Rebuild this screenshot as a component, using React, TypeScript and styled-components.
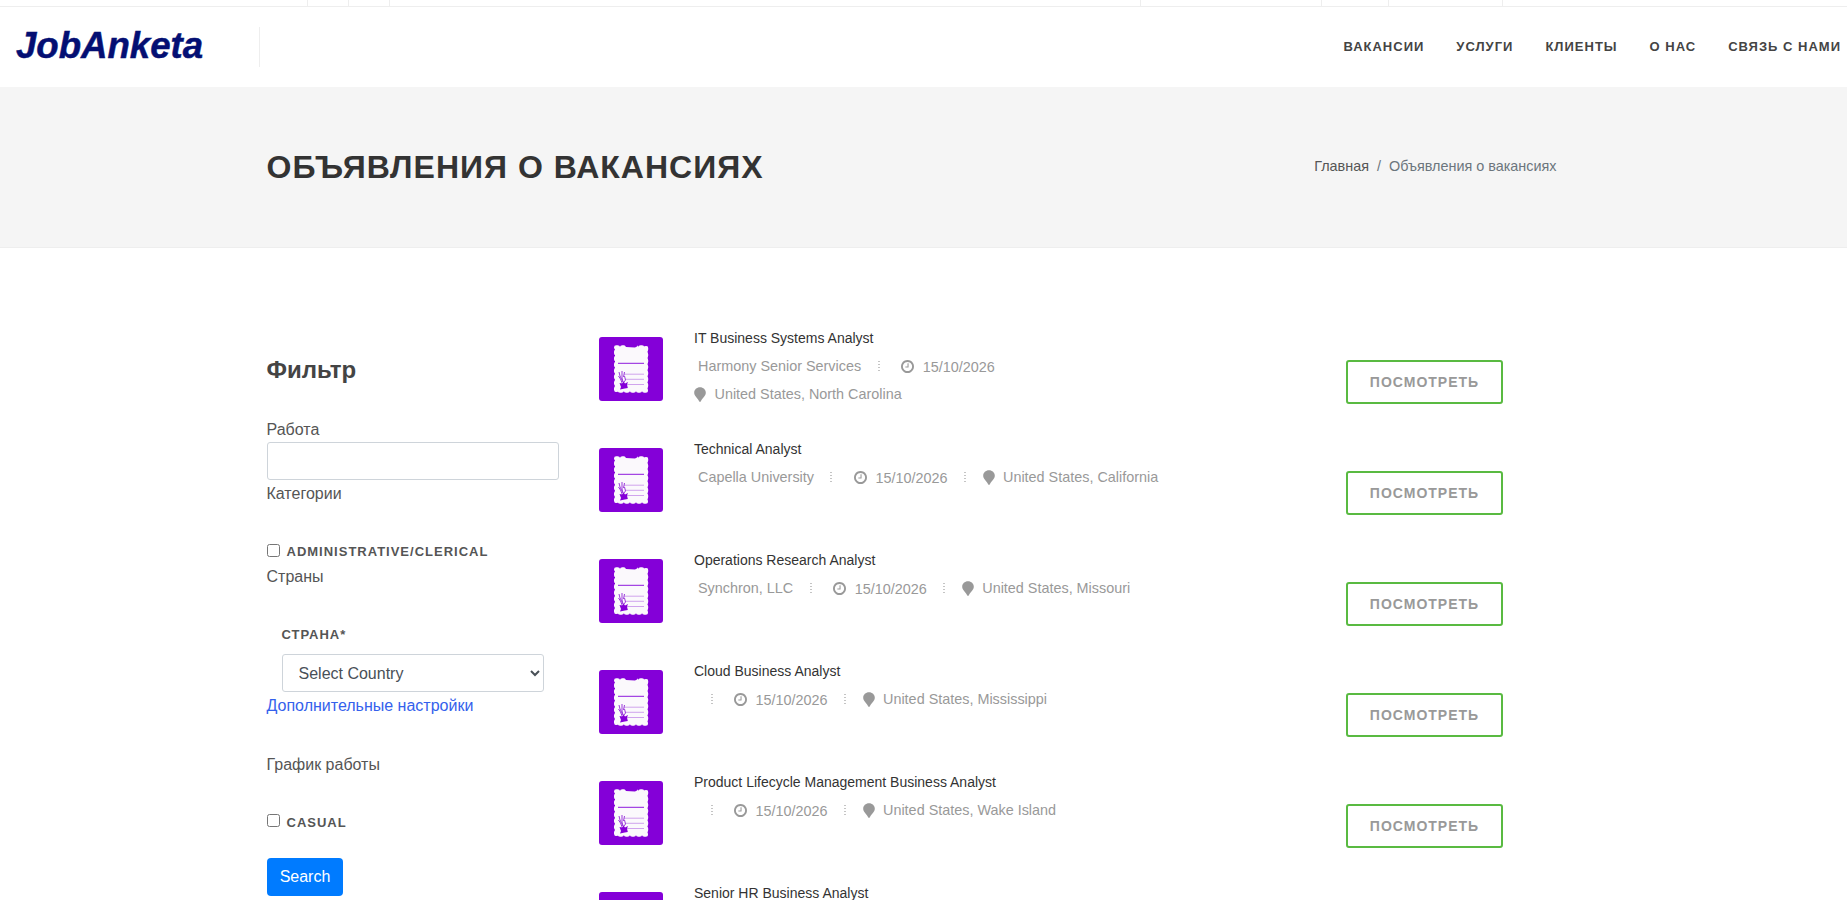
import React from "react";
import styled, { createGlobalStyle } from "styled-components";

const Global = createGlobalStyle`
  *, *::before, *::after { box-sizing: border-box; }
  html, body { margin: 0; height: 900px; overflow: hidden; background: #fff; }
  body { font-family: "Liberation Sans", Arial, sans-serif; font-size: 16px; line-height: 26px; color: #555; }
`;

const Page = styled.div`height: 900px; overflow: hidden;`;

const TopBar = styled.div`
  height: 7px;
  display: flex;
  justify-content: space-between;
  padding: 0 344px 0 307px;
  border-bottom: 1px solid #eee;
`;
const Group = styled.div`display: flex;`;
const Cell = styled.div<{ $w?: number }>`
  width: ${(p) => p.$w ?? 1}px;
  border-left: 1px solid #eee;
`;

const Header = styled.header`
  height: 80px;
  display: flex;
  align-items: center;
  justify-content: space-between;
  padding-right: 6px;
`;
const LogoBox = styled.div`
  width: 260px;
  height: 40px;
  border-right: 1px solid #eee;
  padding: 1px 0 0 16px;
`;
const Logo = styled.a`
  display: block;
  font-size: 36.6px;
  line-height: 36px;
  font-weight: 700;
  font-style: italic;
  color: #040f73;
  -webkit-text-stroke: 0.5px #040f73;
`;
const Nav = styled.nav`display: flex; gap: 32px;`;
const NavLink = styled.a`
  font-size: 13px;
  line-height: 22px;
  font-weight: 700;
  letter-spacing: 1px;
  color: #444;
  white-space: nowrap;
`;

const TitleBand = styled.section`
  height: 161px;
  background: #f5f5f5;
  border-bottom: 1px solid #eee;
  display: flex;
  justify-content: space-between;
  align-items: center;
  padding: 0 290.5px 0 266.5px;
`;
const PageTitle = styled.h1`
  margin: 0;
  font-size: 32px;
  line-height: 36px;
  letter-spacing: 1px;
  font-weight: 600;
  color: #333;
`;
const Crumbs = styled.div`
  display: flex;
  gap: 8px;
  margin-bottom: 2px;
  font-size: 14.4px;
  line-height: 22px;
  color: #6c757d;
`;
const CrumbLink = styled.a`color: #555;`;

const Content = styled.main`
  display: flex;
  padding: 89px 0 0 266.5px;
`;
const Sidebar = styled.aside`width: 292px; margin-right: 40.5px; padding-top: 10px;`;
const FilterTitle = styled.h3`
  margin: 0 0 28px;
  font-size: 24px;
  line-height: 36px;
  font-weight: 600;
  color: #444;
  padding-top: 5px;
`;
const Label = styled.div<{ $top?: number; $low?: boolean }>`
  height: 26px;
  margin-top: ${(p) => p.$top ?? 0}px;
  line-height: ${(p) => (p.$low ? 28 : 26)}px;
`;
const Input = styled.input`
  display: block;
  width: 100%;
  height: 38px;
  border: 1px solid #ced4da;
  border-radius: 3px;
  background: #fff;
`;
const Check = styled.label<{ $top: number; $lift?: number }>`
  display: flex;
  gap: 7px;
  margin-top: ${(p) => p.$top}px;
  height: 20px;
  input { margin: 0; width: 13px; height: 13px; }
  span { margin-top: -${(p) => p.$lift ?? 0}px; }
`;
const Caps = styled.span`
  font-size: 13px;
  line-height: 17px;
  font-weight: 700;
  letter-spacing: 1px;
  color: #555;
`;
const Field = styled.div`
  display: flex;
  flex-direction: column;
  gap: 11px;
  padding: 36px 15px 0;
`;
const Select = styled.select`
  width: 100%;
  height: 38px;
  padding: 6px 12px;
  border: 1px solid #ced4da;
  border-radius: 3px;
  background: #fff;
  font: 16px/24px "Liberation Sans", Arial, sans-serif;
  color: #495057;
`;
const More = styled.a`display: block; height: 26px; line-height: 28px; color: #3461ec;`;
const Search = styled.button`
  display: block;
  margin-top: 24px;
  width: 76px;
  height: 38px;
  padding: 0 0 0 1px;
  border: 0;
  border-radius: 4px;
  background: #007bff;
  color: #fff;
  font: 16px/24px "Liberation Sans", Arial, sans-serif;
`;

const List = styled.div`width: 904px;`;
const Job = styled.article`
  height: 111px;
  display: flex;
  align-items: flex-start;
`;
const Thumb = styled.svg`display: block; width: 64px; height: 64px; margin: 0 31px 0 0;`;
const Info = styled.div`width: 480px; flex: none; margin-top: -13px;`;
const JobTitle = styled.h4`
  margin: 0;
  font-size: 14px;
  line-height: 28px;
  font-weight: 400;
  color: #333;
`;
const Meta = styled.div`
  display: flex;
  flex-wrap: wrap;
  font-size: 14.4px;
  line-height: 28px;
  color: #999;
`;
const Company = styled.span`padding-left: 4px;`;
const Dots = styled.i<{ $gap: number }>`
  width: 2px;
  height: 12px;
  margin: 9px ${(p) => p.$gap}px 0 16.5px;
  background: repeating-linear-gradient(#c4c4c4 0 1px, #fff 1px 3px);
`;
const Item = styled.span<{ $drop?: number }>`
  display: flex;
  align-items: center;
  height: 28px;
  padding-top: ${(p) => p.$drop ?? 0}px;
  svg { display: block; flex: none; }
`;
const Text = styled.span<{ $gap: number }>`margin-left: ${(p) => p.$gap}px;`;
const ViewButton = styled.a`
  display: block;
  width: 157px;
  height: 44px;
  margin: 23px 0 0 auto;
  border: 2px solid #59ba41;
  border-radius: 3px;
  text-align: center;
  font-size: 14px;
  line-height: 40px;
  font-weight: 700;
  letter-spacing: 1px;
  color: #999;
`;

const Clock = () => (
  <svg width="13" height="13" viewBox="128 128 1536 1536" fill="#999">
    <path d="M1024 544v448q0 14-9 23t-23 9h-320q-14 0-23-9t-9-23v-64q0-14 9-23t23-9h224v-352q0-14 9-23t23-9h64q14 0 23 9t9 23zm416 352q0-148-73-273t-198-198-273-73-273 73-198 198-73 273 73 273 198 198 273 73 273-73 198-198 73-273zm224 0q0 209-103 385.5t-279.5 279.5-385.5 103-385.5-103-279.5-279.5-103-385.5 103-385.5 279.5-279.5 385.5-103 385.5 103 279.5 279.5 103 385.5z" />
  </svg>
);
const Pin = () => (
  <svg width="12" height="15" viewBox="0 0 12 15" fill="#999">
    <path d="M6 .3C2.700.3.200 2.700.200 5.800c0 3.400 3.500 5.300 4.900 8.400.3.800 1.500.8 1.800 0 1.400-3.100 4.900-5 4.900-8.400C11.800 2.700 9.300.3 6 .3z" />
  </svg>
);
const Document = () => (
  <Thumb viewBox="0 0 64 64">
    <rect width="64" height="64" rx="3" fill="#8400d8" />
    <rect x="16" y="9.500" width="32.500" height="45" fill="#fbf9fc" />
    <path
      d="M17.200 10.500H47V53.500H17.200z"
      fill="none"
      stroke="#fbf9fc"
      strokeWidth="4.400"
      strokeLinecap="round"
      strokeDasharray="1.500 4.580"
    />
    <path d="M26 8h12v1.500l-2 1-9-.5z" fill="#8400d8" />
    <path d="M19 26.300h26" stroke="#8f1adc" strokeWidth="1" />
    <path d="M25 37.200h20M26 42.300h19M28 47.500h17" stroke="#bd80e6" strokeWidth=".7" />
    <path
      d="M20 35l1 4 3 6M23 34v7l1 4M25.500 35l-1 5M19.500 39l2 3 2 5M25.500 39l1 4-3 4"
      fill="none"
      stroke="#9b3bdb"
      strokeWidth="1"
    />
    <path d="M20.500 46l3 .6 1-2 1.500 2 3-1.500-1 2.500.8 3.400-3 .5-4.800 1 1-2.500z" fill="#8400d8" />
  </Thumb>
);

const jobs = [
  { title: "IT Business Systems Analyst", company: "Harmony Senior Services", place: "United States, North Carolina", wrap: true },
  { title: "Technical Analyst", company: "Capella University", place: "United States, California" },
  { title: "Operations Research Analyst", company: "Synchron, LLC", place: "United States, Missouri" },
  { title: "Cloud Business Analyst", company: "", place: "United States, Mississippi" },
  { title: "Product Lifecycle Management Business Analyst", company: "", place: "United States, Wake Island" },
];

const Place = ({ name }: { name: string }) => (
  <Item><Pin /><Text $gap={8.5}>{name}</Text></Item>
);

export default function App() {
  return (
    <Page>
      <Global />
      <TopBar>
        <Group><Cell $w={41} /><Cell $w={41} /><Cell /></Group>
        <Group><Cell $w={181} /><Cell $w={67} /><Cell $w={114} /><Cell /></Group>
      </TopBar>
      <Header>
        <LogoBox><Logo>JobAnketa</Logo></LogoBox>
        <Nav>
          {["ВАКАНСИИ", "УСЛУГИ", "КЛИЕНТЫ", "О НАС", "СВЯЗЬ С НАМИ"].map((t) => (
            <NavLink key={t}>{t}</NavLink>
          ))}
        </Nav>
      </Header>
      <TitleBand>
        <PageTitle>ОБЪЯВЛЕНИЯ О ВАКАНСИЯХ</PageTitle>
        <Crumbs><CrumbLink>Главная</CrumbLink><span>/</span><span>Объявления о вакансиях</span></Crumbs>
      </TitleBand>
      <Content>
        <Sidebar>
          <FilterTitle>Фильтр</FilterTitle>
          <Label $low>Работа</Label>
          <Input />
          <Label $low>Категории</Label>
          <Check $top={38} $lift={1}><input type="checkbox" /><Caps>ADMINISTRATIVE/CLERICAL</Caps></Check>
          <Label>Страны</Label>
          <Field>
            <Caps>СТРАНА*</Caps>
            <Select><option>Select Country</option></Select>
          </Field>
          <More>Дополнительные настройки</More>
          <Label $top={34}>График работы</Label>
          <Check $top={36}><input type="checkbox" /><Caps>CASUAL</Caps></Check>
          <Search>Search</Search>
        </Sidebar>
        <List>
          {jobs.map((j) => (
            <Job key={j.title}>
              <Document />
              <Info>
                <JobTitle>{j.title}</JobTitle>
                <Meta>
                  {j.company && <Company>{j.company}</Company>}
                  <Dots $gap={21.5} />
                  <Item $drop={1}><Clock /><Text $gap={8.5}>15/10/2026</Text></Item>
                  {!j.wrap && <><Dots $gap={16.5} /><Place name={j.place} /></>}
                </Meta>
                {j.wrap && <Meta><Place name={j.place} /></Meta>}
              </Info>
              <ViewButton>ПОСМОТРЕТЬ</ViewButton>
            </Job>
          ))}
          <Job>
            <Document />
            <Info><JobTitle>Senior HR Business Analyst</JobTitle></Info>
          </Job>
        </List>
      </Content>
    </Page>
  );
}
